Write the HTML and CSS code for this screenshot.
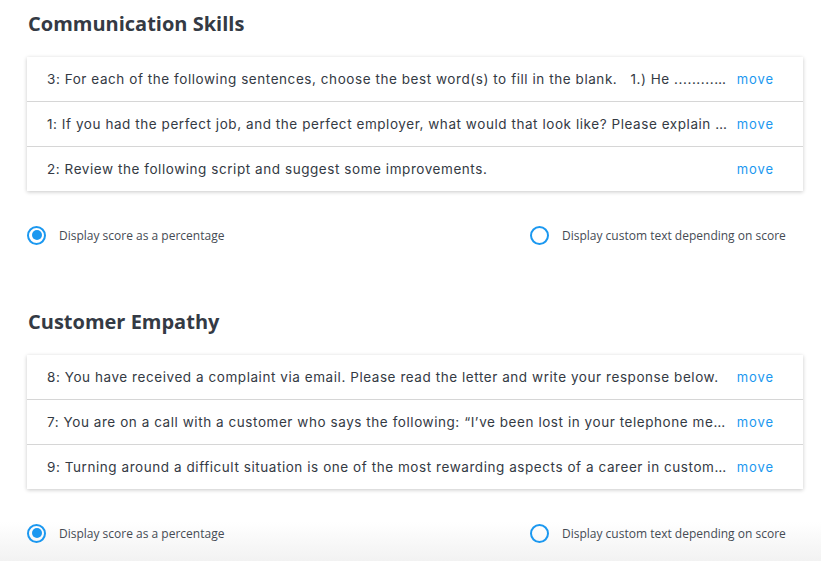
FILE: index.html
```html
<!DOCTYPE html>
<html lang="en">
<head>
<meta charset="utf-8">
<title>Scoring</title>
<link rel="stylesheet" href="styles.css">
</head>
<body>
<main class="page">
  <section class="section">
    <h2 class="section-title">Communication Skills</h2>
    <div class="card">
      <div class="row"><span class="q">3: For each of the following sentences, choose the best word(s) to fill in the blank. &nbsp; 1.) He ............................ to the store yesterday.</span><a class="move" href="#">move</a></div>
      <div class="row"><span class="q">1: If you had the perfect job, and the perfect employer, what would that look like? Please explain your answer in detail.</span><a class="move" href="#">move</a></div>
      <div class="row"><span class="q">2: Review the following script and suggest some improvements.</span><a class="move" href="#">move</a></div>
    </div>
    <div class="options">
      <label class="opt"><span class="radio checked"></span><span>Display score as a percentage</span></label>
      <label class="opt"><span class="radio"></span><span>Display custom text depending on score</span></label>
    </div>
  </section>
  <section class="section">
    <h2 class="section-title">Customer Empathy</h2>
    <div class="card">
      <div class="row"><span class="q">8: You have received a complaint via email. Please read the letter and write your response below.</span><a class="move" href="#">move</a></div>
      <div class="row"><span class="q">7: You are on a call with a customer who says the following: “I’ve been lost in your telephone menu for twenty minutes.”</span><a class="move" href="#">move</a></div>
      <div class="row"><span class="q">9: Turning around a difficult situation is one of the most rewarding aspects of a career in customer service.</span><a class="move" href="#">move</a></div>
    </div>
    <div class="options">
      <label class="opt"><span class="radio checked"></span><span>Display score as a percentage</span></label>
      <label class="opt"><span class="radio"></span><span>Display custom text depending on score</span></label>
    </div>
  </section>
</main>
</body>
</html>
```
FILE: styles.css
```css
* { box-sizing: border-box; }
html {
  margin: 0;
  height: 561px;
  overflow: hidden;
  background: linear-gradient(to bottom, #fff 0, #fff 522px, #f2f2f2 561px);
}
body {
  margin: 0;
  height: 561px;
  overflow: hidden;
  font-family: "Open Sans", "Liberation Sans", sans-serif;
  color: #333a44;
}

.page { padding-left: 27px; width: 803px; }

.section { margin-bottom: 63px; }

.section-title {
  margin: 10px 0 19px 1px;
  font-size: 20px;
  line-height: 28px;
  font-weight: 700;
  color: #343a44;
}

.card {
  background: #fff;
  box-shadow: 0 1px 4px rgba(0,0,0,0.22);
}

.row {
  display: flex;
  align-items: center;
  height: 45px;
  padding: 0 30px 0 20px;
  border-top: 1px solid #d6d6d6;
  font-family: Inter, "Open Sans", sans-serif;
  font-size: 13.5px;
  letter-spacing: 0.56px;
  color: #343a44;
}
.row:first-child { border-top: none; height: 44px; }

.q {
  flex: 1;
  min-width: 0;
  white-space: nowrap;
  overflow: hidden;
  text-overflow: ellipsis;
  margin-right: 7px;
}

.move {
  flex: none;
  color: #1b98f0;
  text-decoration: none;
  font-size: 13px;
  letter-spacing: 0.9px;
  margin-right: -1px;
}

.options {
  display: grid;
  grid-template-columns: 503px auto;
  margin-top: 34px;
}

.opt {
  display: flex;
  align-items: center;
  gap: 13px;
  height: 20px;
  font-size: 12px;
  color: #454b54;
}

.radio {
  flex: none;
  width: 19px;
  height: 19px;
  border: 2px solid #1b98f0;
  border-radius: 50%;
  display: flex;
  align-items: center;
  justify-content: center;
}
.radio.checked::after {
  content: "";
  width: 10px;
  height: 10px;
  border-radius: 50%;
  background: #1b98f0;
}
```
